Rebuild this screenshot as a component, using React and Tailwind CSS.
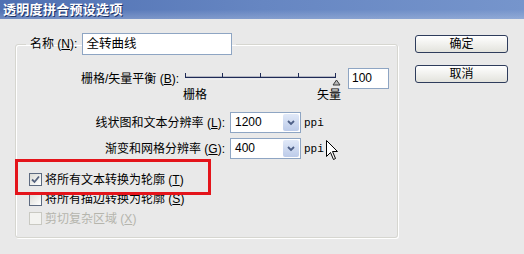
import React from 'react';

// Mnemonic suffix like " (N):" with the key underlined
const Key = ({ k, colon = true }) => (
    <span> (<u>{k}</u>){colon ? ':' : ''}</span>
);

const CheckBox = ({ checked, disabled }) => (
    <span
        className={
            disabled
                ? 'w-[13px] h-[13px] border border-[#c9c9c2] bg-[#f3f3f0] flex items-center justify-center'
                : 'w-[13px] h-[13px] border border-[#5d6a80] bg-gradient-to-br from-[#dcdcd6] to-white flex items-center justify-center'
        }
    >
        {checked && (
            <svg width="9" height="9" viewBox="0 0 9 9">
                <path d="M1 4.5 L3.5 7 L8 1.5" fill="none" stroke="#56637e" strokeWidth="1.8" />
            </svg>
        )}
    </span>
);

const Dropdown = ({ value }) => (
    <div className="flex items-center gap-[3px]">
        <div className="w-[71px] h-[21px] border border-[#8ea5c3] bg-white flex items-center">
            <span className="flex-1 pl-[4px] leading-[19px]">{value}</span>
            <span className="w-[16px] h-[17px] mr-[1px] rounded-[2px] bg-gradient-to-b from-[#e1e9f8] to-[#bccbe9] flex items-center justify-center">
                <svg width="8" height="6" viewBox="0 0 8 6">
                    <path d="M1 1 L4 4 L7 1" fill="none" stroke="#4d5f86" strokeWidth="1.8" />
                </svg>
            </span>
        </div>
        <span className="font-['Liberation_Mono',monospace] text-[11px] leading-[12px] pt-[1px]">ppi</span>
    </div>
);

const Slider = () => (
    <svg width="160" height="21" viewBox="0 0 160 21">
        <line x1="3" y1="9.5" x2="153" y2="9.5" stroke="#1f2b56" strokeWidth="1.5" />
        <line x1="3" y1="10.8" x2="153" y2="10.8" stroke="#ffffff" strokeWidth="1" />
        {[3, 40, 78, 116, 153].map(x => (
            <line key={x} x1={x + 0.5} y1="5" x2={x + 0.5} y2="10" stroke="#1f2b56" strokeWidth="1" />
        ))}
        <path d="M154.5 12 L151 17 L158 17 Z" fill="#b9b9b9" stroke="#3a3a3a" strokeWidth="1" />
    </svg>
);

const Button = ({ children }) => (
    <button className="w-[93px] h-[18px] rounded-[3px] border border-[#2e3c5c] bg-gradient-to-b from-white to-[#e3e3dd] text-[12px] leading-[16px] text-black">
        {children}
    </button>
);

export default function App() {
    return (
        <div className="relative w-[524px] h-[254px] overflow-hidden bg-[#e9e9e9] text-black text-[12px] font-[family-name:'Liberation_Sans','Noto_Sans_CJK_SC',sans-serif]">
            {/* Title bar */}
            <div className="h-[19px] bg-gradient-to-r from-[#4f70b2] via-[#6686c2] to-[#7695cc]">
                <div className="h-full bg-gradient-to-b from-transparent via-transparent to-white/20 pl-[3px] flex items-center">
                    <span className="text-white font-bold text-[13px] leading-[13px] tracking-[0.3px] [text-shadow:1px_1px_0_#1c3268]">
                        透明度拼合预设选项
                    </span>
                </div>
            </div>

            <div className="flex pl-[15px] pt-[14px]">
                {/* Options group */}
                <fieldset className="w-[383px] h-[205px] border border-[#d6d6d0] rounded-[3px] shadow-[inset_1px_1px_0_#fff,1px_1px_0_#fff]">
                    <legend className="ml-[10px] px-[4px] flex items-center gap-[5px]">
                        <span className="leading-[22px]">名称<Key k="N" /></span>
                        <span className="w-[150px] h-[22px] border border-[#8ea5c3] bg-white pl-[3px] leading-[20px] text-[12.5px]">
                            全转曲线
                        </span>
                    </legend>

                    {/* Raster / vector balance */}
                    <div className="mt-[13px] flex items-center h-[21px]">
                        <span className="w-[166px] text-right pr-[3px]">栅格/矢量平衡<Key k="B" /></span>
                        <Slider />
                        <span className="ml-[6px] w-[41px] h-[21px] border border-[#8ea5c3] bg-white pl-[3px] leading-[19px]">100</span>
                    </div>
                    <div className="flex h-[12px] leading-[12px]">
                        <span className="ml-[167px]">栅格</span>
                        <span className="ml-[110px]">矢量</span>
                    </div>

                    {/* Resolutions */}
                    <div className="mt-[11px] flex items-center h-[21px]">
                        <span className="w-[214px] text-right pr-[5px]">线状图和文本分辨率<Key k="L" /></span>
                        <Dropdown value="1200" />
                    </div>
                    <div className="mt-[5px] flex items-center h-[21px]">
                        <span className="w-[214px] text-right pr-[5px]">渐变和网格分辨率<Key k="G" /></span>
                        <Dropdown value="400" />
                    </div>

                    {/* Checkboxes */}
                    <div className="mt-[11px] pl-[13px] flex flex-col">
                        <label className="h-[19px] flex items-center gap-[3px]">
                            <CheckBox checked />
                            <span>将所有文本转换为轮廓<Key k="T" colon={false} /></span>
                        </label>
                        <label className="h-[20px] flex items-center gap-[3px]">
                            <CheckBox />
                            <span>将所有描边转换为轮廓<Key k="S" colon={false} /></span>
                        </label>
                        <label className="h-[19px] flex items-center gap-[3px] text-[#b5b5ad]">
                            <CheckBox disabled />
                            <span>剪切复杂区域<Key k="X" colon={false} /></span>
                        </label>
                    </div>
                </fieldset>

                {/* Buttons */}
                <div className="ml-[17px] pt-[2px] flex flex-col gap-[12px]">
                    <Button>确定</Button>
                    <Button>取消</Button>
                </div>
            </div>

            {/* Red annotation frame */}
            <div className="absolute left-[15px] top-[159px] w-[196px] h-[36px] border-[3px] border-[#e4141b]" />

            {/* Mouse cursor */}
            <svg className="absolute left-[326px] top-[140px]" width="13" height="21" viewBox="0 0 13 21">
                <path d="M0.5 0.5 L0.5 16.5 L4.5 12.5 L7.5 19.5 L9.5 18.5 L6.5 11.5 L11.5 11.5 Z" fill="#fff" stroke="#000" strokeWidth="1" />
            </svg>
        </div>
    );
}
